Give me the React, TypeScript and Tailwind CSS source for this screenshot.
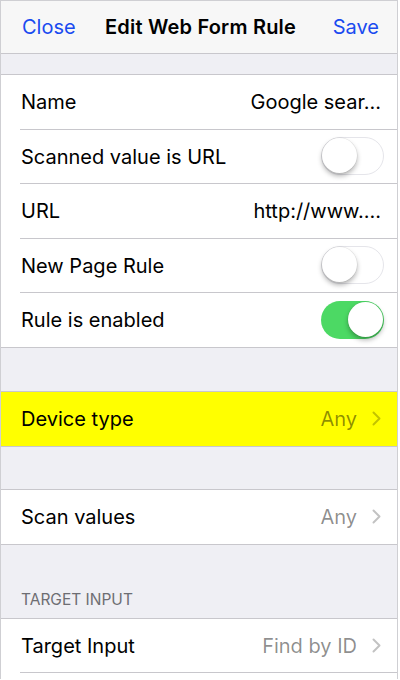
import React from "react";

const font = { fontFamily: "Inter, 'Open Sans', 'Liberation Sans', sans-serif" };

function Chevron() {
  return (
    <svg width="9" height="15" viewBox="0 0 9 15" className="ml-[15px]">
      <path d="M1.5 1.5 L7.5 7.5 L1.5 13.5" fill="none" stroke="rgba(0,0,0,0.24)" strokeWidth="2" strokeLinecap="round" strokeLinejoin="round" />
    </svg>
  );
}

function Switch({ on }: { on: boolean }) {
  return on ? (
    <div className="relative h-[38px] w-[63px] rounded-full bg-[#4cd964]">
      <div className="absolute right-[1.5px] top-[1.5px] h-[35px] w-[35px] rounded-full bg-white shadow-[0_3px_5px_rgba(0,0,0,0.3),0_0_0_0.5px_rgba(0,0,0,0.08)]" />
    </div>
  ) : (
    <div className="relative h-[38px] w-[63px] rounded-full border-[1.5px] border-[#e5e5ea] bg-white">
      <div className="absolute left-0 top-0 h-[35px] w-[35px] rounded-full bg-white shadow-[0_3px_5px_rgba(0,0,0,0.3),0_0_0_0.5px_rgba(0,0,0,0.08)]" />
    </div>
  );
}

function Row({
  label,
  value,
  sw,
  chevron,
  sep = true,
  h = "h-[54.5px]",
  bg = "bg-white",
}: {
  label: string;
  value?: string;
  sw?: boolean;
  chevron?: boolean;
  sep?: boolean;
  h?: string;
  bg?: string;
}) {
  return (
    <div className={`${h} ${bg} pl-[19px]`}>
      <div
        className={`flex h-full items-center justify-between pl-px ${
          sw !== undefined ? "pr-[13px]" : "pr-[16px]"
        } ${sep ? "border-b border-[#c8c7cc]" : ""}`}
      >
        <span className="pt-px text-[20px] text-black">{label}</span>
        <div className="flex items-center">
          {value !== undefined && (
            <span className={`pt-px text-[20px] ${chevron ? "text-black/45" : "text-black"}`}>{value}</span>
          )}
          {chevron && <Chevron />}
          {sw !== undefined && <Switch on={sw} />}
        </div>
      </div>
    </div>
  );
}

export default function App() {
  return (
    <div style={font} className="h-[680px] w-[400px] bg-white">
      <div className="flex h-[679px] w-[398px] flex-col overflow-hidden border-x border-t border-[#cfcfd3] bg-[#efeff4]">
        <div className="grid h-[53px] shrink-0 grid-cols-[1fr_auto_1fr] items-center border-b border-[#c8c7cc] bg-[#f7f7f7] pl-[21px] pr-[18px]">
          <span className="justify-self-start text-[20px] text-[#1a4bf0]">Close</span>
          <span className="text-[20px] font-semibold tracking-[0.2px] text-black">Edit Web Form Rule</span>
          <span className="justify-self-end text-[20px] text-[#1a4bf0]">Save</span>
        </div>
        <div className="h-[20px] shrink-0" />
        <div className="shrink-0 border-y border-[#c8c7cc] bg-white">
          <Row label="Name" value="Google sear..." />
          <Row label="Scanned value is URL" sw={false} />
          <Row label="URL" value="http://www...." />
          <Row label="New Page Rule" sw={false} />
          <Row label="Rule is enabled" sw={true} sep={false} h="h-[53.5px]" />
        </div>
        <div className="h-[43px] shrink-0" />
        <div className="shrink-0 border-y border-[#c8c7cc]">
          <Row label="Device type" value="Any" chevron sep={false} h="h-[54px]" bg="bg-[#ffff00]" />
        </div>
        <div className="h-[42px] shrink-0" />
        <div className="shrink-0 border-y border-[#c8c7cc]">
          <Row label="Scan values" value="Any" chevron sep={false} h="h-[54px]" />
        </div>
        <div className="flex h-[73px] shrink-0 items-end pb-[6px] pl-[20px]">
          <span className="text-[15.5px] text-[#6d6d72]">TARGET INPUT</span>
        </div>
        <div className="flex-1 border-t border-[#c8c7cc] bg-white">
          <Row label="Target Input" value="Find by ID" chevron h="h-[54px]" />
        </div>
      </div>
    </div>
  );
}
